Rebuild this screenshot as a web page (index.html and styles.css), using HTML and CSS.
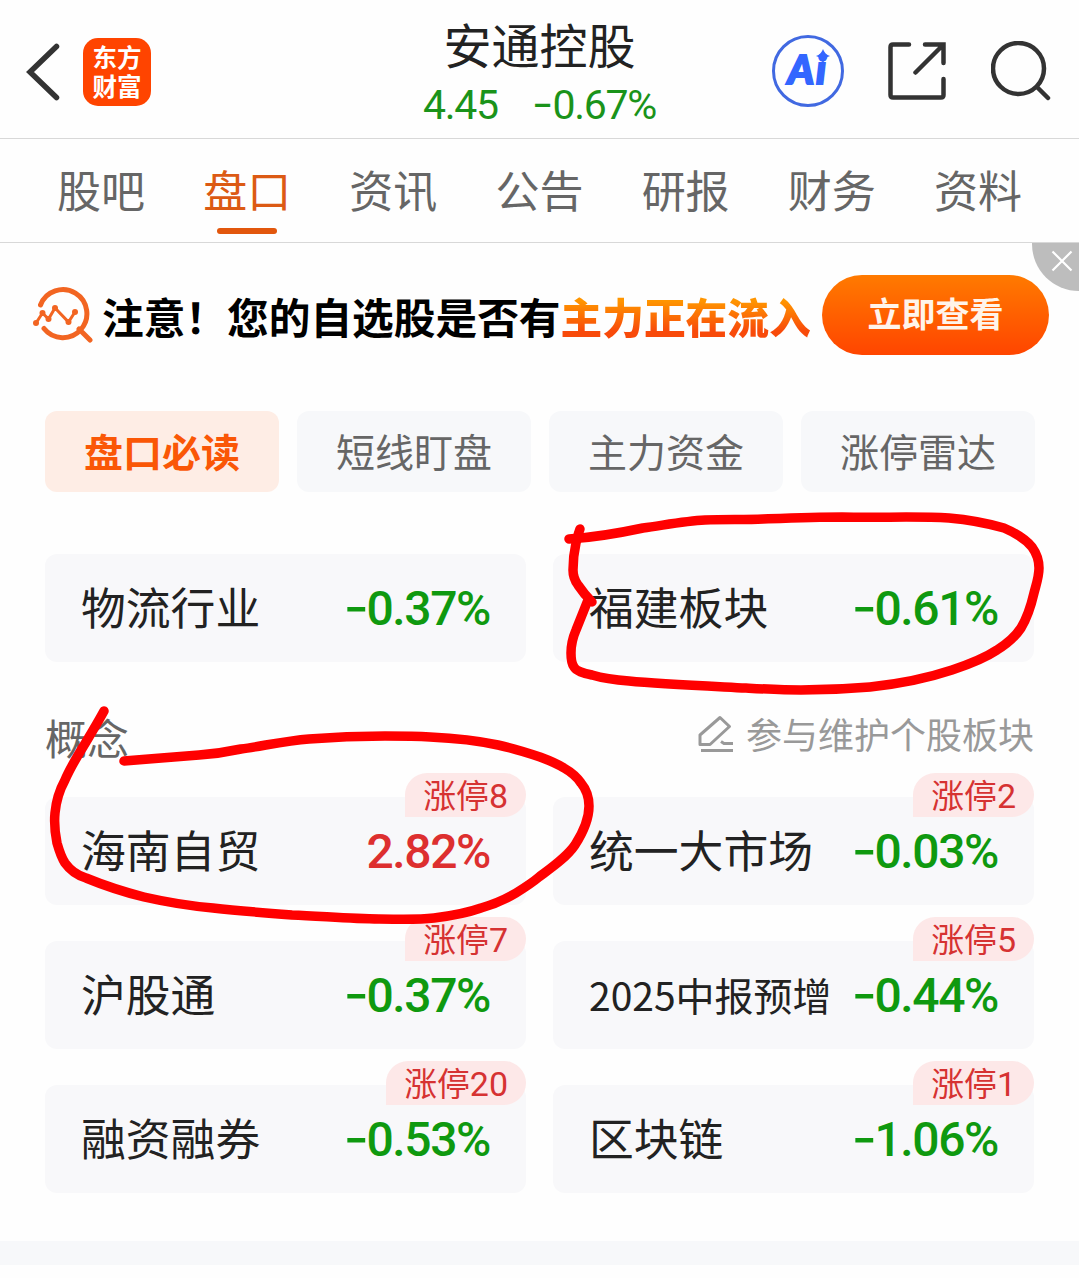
FILE: index.html
```html
<!DOCTYPE html>
<html lang="zh-CN">
  <head>
    <meta charset="UTF-8" />
    <meta name="viewport" content="width=device-width, initial-scale=1.0" />
    <title>安通控股</title>
    <link rel="stylesheet" href="styles.css">
  </head>
  <body>
    <header class="top-bar">
      <div class="top-left">
        <svg class="back" width="36" height="60" viewBox="0 0 36 60">
          <path d="M31.500 4.500 L5 30 L31.500 55.500" />
        </svg>
        <div class="logo">东方<br />财富</div>
      </div>
      <div class="stock">
        <div class="stock-name">安通控股</div>
        <div class="stock-price">
          <span>4.45</span>
          <span><i class="sign">-</i>0.67%</span>
        </div>
      </div>
      <div class="top-right">
        <div class="ai">
          <span>Ai</span>
          <svg class="spark" width="14" height="14" viewBox="0 0 12 12">
            <path d="M6 0 Q7.500 4.500 12 6 Q7.500 7.500 6 12 Q4.500 7.500 0 6 Q4.500 4.500 6 0Z" />
          </svg>
        </div>
        <svg class="line-icon" width="58" height="58" viewBox="0 0 58 58">
          <path d="M21 2.500 H5 Q2.500 2.500 2.500 5 V53 Q2.500 55.500 5 55.500 H53 Q55.500 55.500 55.500 53 V37" />
          <path d="M37 2.500 H55.500 V21 M55 3 L27.500 30.500" />
        </svg>
        <svg class="line-icon" width="60" height="60" viewBox="0 0 60 60">
          <circle cx="27.500" cy="27.500" r="25.500" />
          <path d="M46 46 L57 57" />
        </svg>
      </div>
    </header>

    <nav class="tabs">
      <a>股吧</a>
      <a class="active">盘口</a>
      <a>资讯</a>
      <a>公告</a>
      <a>研报</a>
      <a>财务</a>
      <a>资料</a>
    </nav>

    <section class="promo">
      <svg class="promo-icon" width="62" height="58" viewBox="0 0 62 58">
        <path class="ring" d="M8.500 18 A24 24 0 1 1 12 41.500 M47 42 L58 53" />
        <path class="trend" d="M4 36 L10.500 26 L16.500 32 L23 21 L36.500 35 L43 25" />
        <g>
          <circle cx="4" cy="36" r="3" />
          <circle cx="10.500" cy="26" r="3" />
          <circle cx="16.500" cy="32" r="3" />
          <circle cx="23" cy="21" r="3" />
          <circle cx="36.500" cy="35" r="3" />
          <circle cx="43" cy="25" r="3" />
        </g>
      </svg>
      <div class="promo-text">注意！您的自选股是否有<b>主力正在流入</b></div>
      <button class="promo-button">立即查看</button>
      <div class="close">
        <svg width="22" height="22" viewBox="0 0 22 22">
          <path d="M1.500 1.500 L20.500 20.500 M20.500 1.500 L1.500 20.500" />
        </svg>
      </div>
    </section>

    <main class="content">
      <div class="pills">
        <div class="pill active">盘口必读</div>
        <div class="pill">短线盯盘</div>
        <div class="pill">主力资金</div>
        <div class="pill">涨停雷达</div>
      </div>

      <div class="cards">
        <div class="card">
          <span class="name">物流行业</span>
          <span class="rate"><i class="sign">-</i>0.37%</span>
        </div>
        <div class="card">
          <span class="name">福建板块</span>
          <span class="rate"><i class="sign">-</i>0.61%</span>
        </div>
      </div>

      <div class="section-head">
        <h2>概念</h2>
        <div class="edit">
          <svg width="38" height="38" viewBox="0 0 38 38">
            <path d="M23 2.500 L32.500 11.500 L13 29.500 H3 V20 Z M24 26.500 L27 28.500 H36 M4 35.500 H36" />
          </svg>
          <span>参与维护个股板块</span>
        </div>
      </div>

      <div class="cards">
        <div class="card">
          <span class="name">海南自贸</span>
          <span class="rate up">2.82%</span>
          <span class="badge">涨停<em>8</em></span>
        </div>
        <div class="card">
          <span class="name">统一大市场</span>
          <span class="rate"><i class="sign">-</i>0.03%</span>
          <span class="badge">涨停<em>2</em></span>
        </div>
        <div class="card">
          <span class="name">沪股通</span>
          <span class="rate"><i class="sign">-</i>0.37%</span>
          <span class="badge">涨停<em>7</em></span>
        </div>
        <div class="card">
          <span class="name small">2025中报预增</span>
          <span class="rate"><i class="sign">-</i>0.44%</span>
          <span class="badge">涨停<em>5</em></span>
        </div>
        <div class="card">
          <span class="name">融资融券</span>
          <span class="rate"><i class="sign">-</i>0.53%</span>
          <span class="badge">涨停<em>20</em></span>
        </div>
        <div class="card">
          <span class="name">区块链</span>
          <span class="rate"><i class="sign">-</i>1.06%</span>
          <span class="badge">涨停<em>1</em></span>
        </div>
      </div>
    </main>
    <div class="divider"></div>

    <!-- red pen marks over the cards -->
    <svg class="marks" width="1079" height="1278" viewBox="0 0 1079 1278">
      <path d="M569 539 C585 538 615 534 643 528 C665 525 685 521 705 520 C725 519 745 520 763 519 C790 518 815 517 842 517 C880 518 915 516 949 518 C972 520 990 524 1004 528 C1018 534 1027 541 1032 547 C1037 554 1039 561 1039 568 C1039 577 1036 585 1034 593 C1031 606 1027 618 1021 628 C1015 637 1007 644 997 650 C985 658 970 664 952 670 C925 679 898 684 870 687 C847 689 824 690 801 690 C783 690 765 689 746 688 C707 686 660 684 629 681 C615 680 602 678 592 675 C583 673 576 671 574 667 C571 663 571 657 571 653 C571 645 573 637 576 630 L588 600" />
      <path d="M580 529 C578 534 577 539 576 543 C574 552 573 561 573 570 C573 576 575 581 578 585 C582 591 586 596 592 602" />
      <path d="M104 711 C98 722 92 732 86 742 C78 755 70 768 65 780 C59 791 56 802 55 813 C54 823 55 833 57 843 C59 850 61 857 65 863 C70 870 76 875 86 878 C103 885 124 892 144 897 C166 902 190 906 213 908 C240 911 266 913 292 915 C321 916 350 919 379 919 C398 919 416 920 434 918 C450 916 467 913 481 908 C495 904 506 899 516 893 C524 888 532 883 539 877 C551 868 566 858 575 845 C584 831 589 817 589 806 C589 797 586 789 581 783 C577 777 571 772 564 768 C556 763 548 760 540 757 C528 753 512 748 498 745 C475 740 452 738 430 737 C415 736 400 736 385 736 C360 736 334 737 309 739 C285 741 263 746 241 749 C227 752 213 754 199 755 C173 757 149 759 124 761" />
    </svg>
  </body>
</html>
```
FILE: styles.css
```css
* {
  box-sizing: border-box;
}

body {
  position: relative;
  margin: 0;
  height: 1278px;
  overflow: hidden;
  background-color: #fefefe;
  font-family: "Noto Sans CJK SC", sans-serif;
  color: #222;
}

/* Header */
.top-bar {
  display: grid;
  grid-template-columns: 1fr auto 1fr;
  height: 139px;
  padding: 0 28px;
  border-bottom: 1px solid #d8d8d8;
}

.top-left {
  display: flex;
  align-items: center;
  height: 143px;
  margin-left: -3px;
  gap: 22px;
}

.back {
  fill: none;
  stroke: #333;
  stroke-width: 5.5;
  stroke-linecap: round;
}

.logo {
  width: 68px;
  height: 68px;
  padding-top: 4px;
  border-radius: 15px;
  background-color: #ff4400;
  color: #fff;
  font-size: 24.5px;
  font-weight: 700;
  line-height: 29px;
  text-align: center;
}

.stock {
  text-align: center;
}

.stock-name {
  margin-top: 14px;
  font-size: 48px;
  line-height: 58px;
}

.stock-price {
  display: flex;
  justify-content: center;
  gap: 35px;
  margin-top: 8px;
  font-family: Roboto, sans-serif;
  font-size: 41px;
  line-height: 50px;
  letter-spacing: -1.3px;
  color: #1a931a;
}

/* wider dash than the one in the digit font */
.sign {
  display: inline-block;
  margin-right: 2px;
  font-family: Inter, sans-serif;
  font-style: normal;
  line-height: 1;
  transform: translateY(-1px) scaleX(1.15);
}

.top-right {
  display: flex;
  justify-content: flex-end;
  align-items: center;
  height: 142px;
  gap: 44px;
}

.ai {
  position: relative;
  width: 72px;
  height: 72px;
  border: 3.6px solid #4169e1;
  border-radius: 50%;
  color: #3366ff;
  font-family: Lato, sans-serif;
  font-size: 40px;
  font-weight: 900;
  font-style: italic;
  line-height: 63px;
  letter-spacing: 2px;
  text-align: center;
  -webkit-text-stroke: 2px #3366ff;
}

.spark {
  position: absolute;
  top: 11px;
  left: 41px;
  fill: #3366ff;
}

.line-icon {
  fill: none;
  stroke: #333;
  stroke-width: 4.5;
  stroke-linecap: round;
}

.line-icon:last-child {
  margin-left: 1px;
}

/* Tabs */
.tabs {
  display: grid;
  grid-template-columns: repeat(7, 1fr);
  height: 104px;
  padding: 0 28px;
  border-bottom: 1px solid #d8d8d8;
  font-size: 44px;
  line-height: 101px;
  text-align: center;
  color: #666;
}

.tabs .active {
  position: relative;
  color: #dc5a14;
}

.tabs .active::after {
  content: "";
  position: absolute;
  left: 50%;
  bottom: 8px;
  width: 60px;
  height: 6px;
  margin-left: -30px;
  border-radius: 3px;
  background-color: #e2570d;
}

/* Promo banner */
.promo {
  position: relative;
  display: flex;
  align-items: center;
  height: 144px;
  padding-left: 32px;
}

.promo-icon {
  margin-top: 2px;
  margin-right: 8px;
  fill: #f26522;
}

.promo-icon path {
  fill: none;
  stroke: #f26522;
  stroke-width: 5;
}

.promo-icon .ring {
  stroke-linecap: round;
}

.promo-icon .trend {
  stroke-width: 3;
}

.promo-text {
  width: 707px;
  margin-top: 2px;
  font-size: 41.7px;
  font-weight: 700;
  white-space: nowrap;
  color: #000;
}

.promo-text b {
  background: linear-gradient(#ff9500 25%, #f84a0a 75%);
  -webkit-background-clip: text;
  background-clip: text;
  color: transparent;
}

.promo-button {
  width: 227px;
  height: 80px;
  margin-left: 13px;
  padding: 0 0 5px;
  border: none;
  border-radius: 40px;
  background: linear-gradient(#ff7a00, #ff4500);
  color: #fff4ea;
  font-family: inherit;
  font-size: 34px;
  font-weight: 700;
}

.close {
  position: absolute;
  top: 0;
  right: 0;
  width: 47px;
  height: 48px;
  padding: 7px 0 0 19px;
  border-bottom-left-radius: 48px;
  background-color: #bdbdbd;
}

.close svg {
  display: block;
  fill: none;
  stroke: #fff;
  stroke-width: 2.2;
}

/* Main content */
.content {
  height: 854px;
  padding: 24px 45px 0;
}

.pills {
  display: grid;
  grid-template-columns: repeat(4, 234px);
  gap: 18px;
  margin-bottom: 62px;
}

.pill {
  height: 81px;
  border-radius: 12px;
  background-color: #f7f8fa;
  font-size: 39px;
  line-height: 79px;
  text-align: center;
  color: #666;
}

.pill.active {
  background-color: #feede5;
  color: #fa5706;
  font-weight: 700;
}

.cards {
  display: grid;
  grid-template-columns: 481px 481px;
  column-gap: 27px;
  row-gap: 36px;
}

.card {
  position: relative;
  display: flex;
  justify-content: space-between;
  align-items: center;
  height: 108px;
  padding: 0 36px;
  border-radius: 12px;
  background-color: #f8f8fa;
  white-space: nowrap;
}

.name {
  padding-bottom: 5px;
  font-size: 44.8px;
}

.name.small {
  padding-bottom: 3px;
  font-size: 39px;
}

.rate {
  font-family: Roboto, sans-serif;
  font-size: 48px;
  font-weight: 500;
  letter-spacing: -1.4px;
  color: #0f990f;
}

.rate .sign {
  margin-right: 1px;
}

.rate.up {
  color: #dd2f2f;
}

.badge {
  position: absolute;
  top: -24px;
  right: 0;
  height: 44px;
  padding: 0 18px;
  border-radius: 22px 22px 22px 0;
  background-color: #fde8e8;
  font-size: 32.8px;
  line-height: 42px;
  color: #d63232;
}

.badge em {
  font-family: Roboto, sans-serif;
  font-size: 34px;
  font-style: normal;
}

.section-head {
  display: flex;
  justify-content: space-between;
  align-items: center;
  height: 135px;
  padding-top: 13px;
}

.section-head h2 {
  margin: 0;
  font-size: 42px;
  font-weight: 400;
  color: #666;
}

.edit {
  display: flex;
  align-items: center;
  gap: 11px;
  margin-top: -6px;
  font-size: 36px;
  color: #999;
}

.edit svg {
  margin-top: 2px;
  fill: none;
  stroke: #999;
  stroke-width: 3;
  stroke-linejoin: round;
}

.divider {
  height: 24px;
  background-color: #f7f8fa;
}

.marks {
  position: absolute;
  top: 0;
  left: 0;
  fill: none;
  stroke: #ff0000;
  stroke-width: 9.5;
  stroke-linecap: round;
  stroke-linejoin: round;
  pointer-events: none;
}
```
